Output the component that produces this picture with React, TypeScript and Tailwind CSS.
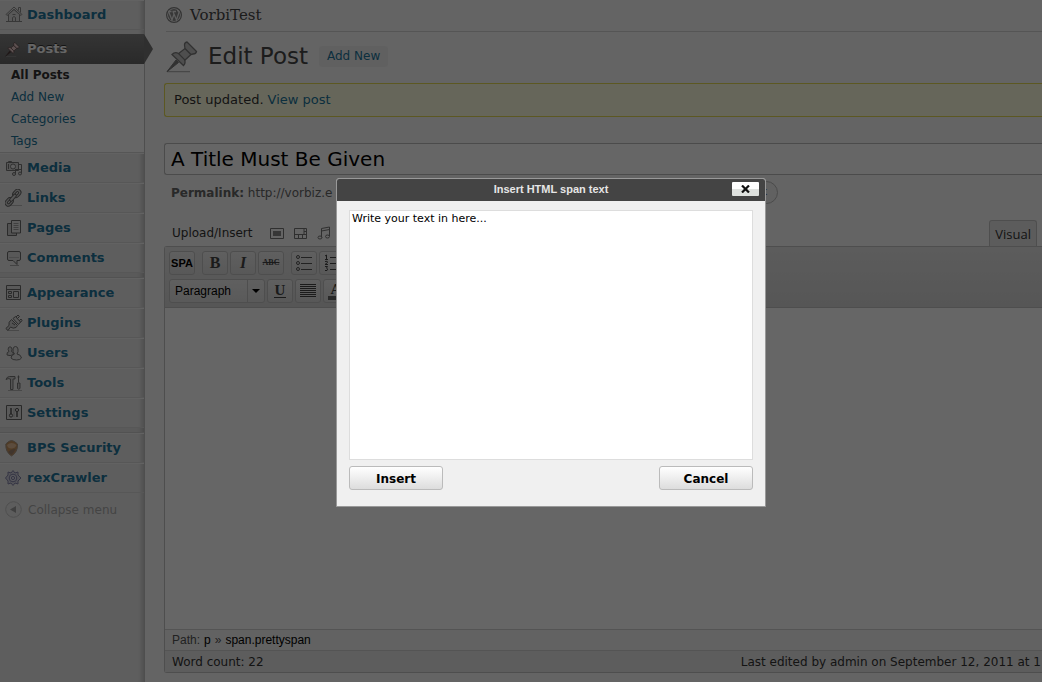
import React from "react";

type IconName =
  | "home" | "media" | "links" | "pages" | "comments" | "appearance"
  | "plugins" | "users" | "tools" | "settings" | "shield" | "gear";

function MenuIcon({ name }: { name: IconName }) {
  const base = {
    width: 18, height: 18, viewBox: "0 0 18 18", fill: "none",
    stroke: "#777777", strokeWidth: 1, "aria-hidden": true, className: "shrink-0",
  } as const;
  switch (name) {
    case "home":
      return (
        <svg {...base} stroke="#8a8a8a">
          <path d="M3.500 8.500v7h11v-7L9 3.500z" fill="#dddddd" />
          <path d="M1 8.500 9 1l8 7.500-1 1L9 3.200 2 9.500z" fill="#eeeeee" />
          <path d="M13.500 4.500v-3h2v5M7.500 15.500v-4q1.500-2 3 0v4M7.500 8.500h3M1 15.500h16" />
        </svg>
      );
    case "media":
      return (
        <svg {...base}>
          <path d="M3.500 3.500v-1h3v1M1.500 3.500h12v8h-12z" fill="#d4d4d4" />
          <circle cx="8" cy="7.500" r="2.500" fill="#eeeeee" />
          <path d="M3.500 5v5M14 5.500h2.500v9M10.500 10v5.500M10.500 10.500h6" />
          <circle cx="9" cy="15" r="1.500" fill="#dddddd" /><circle cx="15" cy="14.500" r="1.500" fill="#dddddd" />
        </svg>
      );
    case "links":
      return (
        <svg {...base} stroke="#666666">
          <path d="M4 16.500h13" stroke="#b8b8b8" />
          <g transform="rotate(-48 8 9)">
            <rect x="-2" y="5.500" width="9" height="6.500" rx="3.200" fill="#cfcfcf" />
            <rect x="9.500" y="5.500" width="9" height="6.500" rx="3.200" fill="#cfcfcf" />
            <rect x="0.500" y="7.700" width="4" height="2.200" rx="1" fill="#ececec" />
            <rect x="12" y="7.700" width="4" height="2.200" rx="1" fill="#ececec" />
            <rect x="4" y="7.300" width="8.500" height="3" rx="1.500" fill="#d8d8d8" />
          </g>
        </svg>
      );
    case "pages":
      return (
        <svg {...base} stroke="#6c6c6c">
          <path d="M6.500 4.500h-4v12h9V14" fill="#cccccc" />
          <path d="M6.500 1.500h9v12.500h-9z" fill="#e6e6e6" />
          <path d="M8.500 4.500h5M8.500 6.500h5M8.500 8.500h5M8.500 10.500h5" stroke="#a0a0a0" />
        </svg>
      );
    case "comments":
      return (
        <svg {...base} stroke="#6c6c6c">
          <path d="M4 2.500h10q1.500 0 1.500 1.500v6q0 1.500-1.500 1.500h-2v4l-4-4H4q-1.500 0-1.500-1.500V4q0-1.500 1.500-1.500z" fill="#dcdcdc" />
          <path d="M4 8.500h10" stroke="#bbbbbb" /><path d="M5 16.500h9" stroke="#a8a8a8" />
        </svg>
      );
    case "appearance":
      return (
        <svg {...base} stroke="#6c6c6c">
          <path d="M1.500 1.500h14v14h-14z" fill="#dedede" />
          <path d="M2 5.500h13.500M3.500 7.500h3v2h-3zM3.500 11.500h3v2h-3zM8.500 7.500h5v6h-5z" />
        </svg>
      );
    case "plugins":
      return (
        <svg {...base} stroke="#6c6c6c">
          <path d="M3 16.500h11" stroke="#b4b4b4" />
          <path d="M6.500 5.500 12.500 11.500 11 13.500Q8 15 5.500 13L3 16.500.8 14.500 4 11.500Q3 8 6.500 5.500z" fill="#d0d0d0" />
          <path d="M8 4.500l5.500 6 2-2.500-5-5.500zM11 3l2-2 1.500 1.500-2 2M14 7l2-2 1 1.500-1.500 2M7 9l3 2" fill="#dedede" />
        </svg>
      );
    case "users":
      return (
        <svg {...base}>
          <path d="M2 11q-.5-3 2-3.500Q2.500 5.500 3.500 3.500 5 2 6.500 3.500 7.500 5.500 6.500 7.500q2 .5 2 3Q5 12.500 2 11z" fill="#d2d2d2" />
          <path d="M6 14q0-3 3.500-4-2-2-1.500-5 .5-2.500 2.500-2.500T13 5q.5 3-1 5 4 .500 4.500 4-1 2-5 2T6 14z" fill="#e0e0e0" />
        </svg>
      );
    case "tools":
      return (
        <svg {...base}>
          <path d="M1 5.500Q2 2.500 4.500 2.500H10v2.500H8v10.500H5.500V5Q3 4 1 5.500z" fill="#cfcfcf" />
          <path d="M13.500 1.500v7M12.500 3h2M12.500 9h2.500v5.500q-1.200 1.500-2.500 0z" fill="#c6c6c6" />
          <path d="M3 16.500h14" stroke="#b4b4b4" />
        </svg>
      );
    case "settings":
      return (
        <svg {...base} stroke="#666666">
          <path d="M1.500 1.500h15v14h-15z" fill="#e0e0e0" />
          <path d="M6 4v6M12 8v5" strokeWidth="1.500" stroke="#555555" />
          <circle cx="6" cy="11.500" r="1.600" stroke="#555555" /><circle cx="12" cy="6" r="1.600" stroke="#555555" />
          <path d="M9 4v9" stroke="#b4b4b4" />
        </svg>
      );
    case "shield":
      return (
        <svg {...base} stroke="#a89a8c">
          <path d="M.8 5Q4 1.500 6.500 1.500T12.500 5q.5 8-6 12Q.3 13 .8 5z" fill="#c79560" />
          <path d="M2 6q4.500-4 9.500 0-1 3-4.500 3.500Q3 10 2 6z" fill="#e5bf98" stroke="none" />
          <path d="M3 13q3-3 7.500-3-1 3-4 6z" fill="#a08470" stroke="none" />
        </svg>
      );
    case "gear":
      return (
        <svg {...base} stroke="#8585aa">
          <path d="M8 1.500l2 2.500 3-1v3l3 3-3 3v3l-3-1-2 2.500L6 14l-3 1v-3L.5 9 3 6V3l3 1z" fill="#cfcfdc" />
          <circle cx="8" cy="9" r="3.800" fill="#dedee8" /><circle cx="8" cy="9" r="1.600" />
        </svg>
      );
  }
}

function PinIcon({ size, tint, edge }: { size: number; tint: string; edge: string }) {
  return (
    <svg width={size} height={size} viewBox="0 0 32 32" className="shrink-0" stroke={edge} aria-hidden="true">
      <path d="M1 30.700h23" stroke="#a5a5a5" />
      <path d="M1 30.700 10 19l2.500 2.500z" fill={edge} />
      <path d="M12 13 19 7.500 25 13.500 18.500 19.500z" fill={tint} strokeWidth="1.300" />
      <path d="M6 13.500Q9 10.500 12.500 12.500L18.500 18.500Q20 22 17.500 24.500z" fill={tint} strokeWidth="1.300" />
      <path d="M18.500 4Q18.500 1.500 21 1L30.500 10.500Q30 13 27 13L25 13.500 19 7.500z" fill={tint} strokeWidth="1.300" />
    </svg>
  );
}

function MenuRow({ icon, label }: { icon: IconName; label: string }) {
  return (
    <li className="border-t border-[#f5f5f5] border-b border-b-[#d9d9d9]">
      <a href="#" className="flex h-7 items-center gap-1 pl-[5px] text-[13px] font-bold text-[#21759b]">
        <MenuIcon name={icon} />
        {label}
      </a>
    </li>
  );
}

function Separator() {
  return <li aria-hidden="true" className="h-[5px] border-b border-[#cccccc] bg-black/5" />;
}

function Sidebar() {
  return (
    <nav aria-label="Admin menu" className="w-[145px] shrink-0 border-r border-[#c4c4c4] bg-[#ececec] shadow-[inset_-6px_0_5px_-4px_#bdbdbd]">
      <ul>
        <MenuRow icon="home" label="Dashboard" />
        <li>
          <a href="#" className="relative mt-1 flex h-[30px] items-center gap-1 bg-linear-to-b from-[#858585] to-[#686868] pl-[5px] text-[13px] font-bold text-white [text-shadow:0_-1px_0_#333]">
            <span className="flex w-[18px]"><PinIcon size={15} tint="#e6c8c8" edge="#4d3838" /></span>
            Posts
            <svg width="9" height="30" viewBox="0 0 9 30" className="absolute top-0 left-full" aria-hidden="true">
              <path d="M0 0 9 15 0 30z" fill="#757575" />
            </svg>
          </a>
          <ul className="border-b border-[#d6d6d6] bg-white pl-[11px] text-[12px] leading-[22px] text-[#21759b]">
            <li><a href="#" className="font-bold text-[#333333]">All Posts</a></li>
            <li><a href="#">Add New</a></li>
            <li><a href="#">Categories</a></li>
            <li><a href="#">Tags</a></li>
          </ul>
        </li>
        <MenuRow icon="media" label="Media" />
        <MenuRow icon="links" label="Links" />
        <MenuRow icon="pages" label="Pages" />
        <MenuRow icon="comments" label="Comments" />
        <Separator />
        <MenuRow icon="appearance" label="Appearance" />
        <MenuRow icon="plugins" label="Plugins" />
        <MenuRow icon="users" label="Users" />
        <MenuRow icon="tools" label="Tools" />
        <MenuRow icon="settings" label="Settings" />
        <Separator />
        <MenuRow icon="shield" label="BPS Security" />
        <MenuRow icon="gear" label="rexCrawler" />
      </ul>
      <button className="flex h-[34px] items-center gap-[5px] pl-[5px] text-[12px] text-[#aaaaaa]">
        <svg width="18" height="18" viewBox="0 0 18 18" aria-hidden="true">
          <circle cx="8.500" cy="8.500" r="7.800" fill="#e8e8e8" stroke="#c4c4c4" />
          <path d="M5 8.500 11 5v7z" fill="#a0a0a0" />
        </svg>
        Collapse menu
      </button>
    </nav>
  );
}

function ToolButton({ label, children }: { label: string; children: React.ReactNode }) {
  return (
    <button aria-label={label} className="flex h-6 w-[26px] shrink-0 items-center justify-center overflow-hidden rounded-[3px] border border-[#c3c3c3] bg-linear-to-b from-[#efefef] to-[#dcdcdc] text-[#444444]">
      {children}
    </button>
  );
}

function Toolbar() {
  return (
    <div className="flex h-[61px] flex-col gap-1 border-b border-[#c4c4c4] bg-linear-to-b from-[#e6e6e6] to-[#d7d7d7] pt-1 pl-1">
      <div className="flex">
        <div className="mr-[7px] flex">
          <ToolButton label="Insert span">
            <span className="font-['Liberation_Sans'] text-[11px] font-bold text-black">SPA</span>
          </ToolButton>
        </div>
        <div className="mr-[7px] flex gap-[2px]">
          <ToolButton label="Bold"><span className="font-['Liberation_Serif'] text-[16px] font-bold">B</span></ToolButton>
          <ToolButton label="Italic"><span className="font-['Liberation_Serif'] text-[16px] font-bold italic">I</span></ToolButton>
          <ToolButton label="Strikethrough"><span className="font-['Liberation_Serif'] text-[8px] font-bold line-through">ABC</span></ToolButton>
        </div>
        <div className="flex gap-[2px]">
          <ToolButton label="Bulleted list">
            <svg width="18" height="18" viewBox="0 0 18 18" fill="none" stroke="#555555">
              <circle cx="3" cy="3" r="1.500" /><circle cx="3" cy="9" r="1.500" /><circle cx="3" cy="15" r="1.500" />
              <path d="M6 3.500h11M6 9.500h11M6 15.500h11" />
            </svg>
          </ToolButton>
          <ToolButton label="Numbered list">
            <svg width="18" height="18" viewBox="0 0 18 18" fill="none" stroke="#444444">
              <path d="M2 2l1.500-1v4M2 5.500h3M2 7.500q3-1 2.500 1L2 10.500h3M2 12.500h2.500L3.500 14q2 1 .5 2.500H2M7 3.500h10M7 9.500h10M7 15.500h10" />
            </svg>
          </ToolButton>
        </div>
      </div>
      <div className="flex gap-[2px]">
        <button aria-label="Format: Paragraph" className="flex h-6 w-[96px] items-center rounded-[3px] border border-[#c3c3c3] bg-linear-to-b from-[#efefef] to-[#e0e0e0] font-['Liberation_Sans'] text-[12px] text-black">
          <span className="flex-1 pl-[5px] text-left">Paragraph</span>
          <span className="flex h-full w-[17px] items-center justify-center border-l border-[#c3c3c3]">
            <svg width="8" height="4" viewBox="0 0 8 4" aria-hidden="true"><path d="M0 0h8L4 4z" /></svg>
          </span>
        </button>
        <ToolButton label="Underline"><span className="border-b border-[#444444] px-px font-['Liberation_Serif'] text-[15px] leading-[13px] font-bold">U</span></ToolButton>
        <ToolButton label="Justify">
          <svg width="16" height="14" viewBox="0 0 16 14" stroke="#444444"><path d="M0 .5h16M0 2.500h16M0 4.500h16M0 6.500h16M0 8.500h16M0 10.500h16M0 12.500h16" /></svg>
        </ToolButton>
        <ToolButton label="Text colour"><span className="border-b-4 border-[#666666] px-[3px] font-['Liberation_Serif'] text-[15px] leading-[13px] font-bold">A</span></ToolButton>
      </div>
    </div>
  );
}

function Editor() {
  return (
    <section aria-label="Post editor" className="flex flex-col">
      <div className="flex h-[26px] items-end justify-between pr-[5px]">
        <div className="flex h-[26px] items-center gap-[17px] pl-2 text-[12px] text-[#333333]">
          <span>Upload/Insert</span>
          <div className="flex items-center gap-[9px]">
            <button aria-label="Add image">
              <svg width="15" height="13" viewBox="0 0 15 13" className="block"><path d="M.5 1.500h13v10H.5z" fill="none" stroke="#777777" /><path d="M3 4h8v5H3z" fill="#8b8b8b" /></svg>
            </button>
            <button aria-label="Add video">
              <svg width="14" height="13" viewBox="0 0 14 13" fill="none" stroke="#777777" className="block"><path d="M.5 1.500h12v10H.5zM10 1.500v6M.5 7.500h12M4.500 7.500v4M8.500 7.500v4M10 4.500h2.500" /></svg>
            </button>
            <button aria-label="Add audio">
              <svg width="14" height="14" viewBox="0 0 14 14" fill="none" stroke="#777777" className="block"><path d="M4.500 11.500v-9l8-1.500v9M4.500 5l8-1.500" /><ellipse cx="3" cy="11.500" rx="2" ry="1.500" /><ellipse cx="10.500" cy="10.500" rx="2" ry="1.500" /></svg>
            </button>
          </div>
        </div>
        <button className="h-[26px] rounded-t-[3px] border border-b-0 border-[#c4c4c4] bg-[#e6e6e6] px-[5px] pt-[2px] font-['Open_Sans'] text-[13px] text-[#333333]">Visual</button>
      </div>
      <div className="rounded-l-[3px] border border-r-0 border-[#c4c4c4]">
        <Toolbar />
        <div className="h-[321px] bg-white" />
        <div className="flex h-[22px] items-center gap-1 border-y border-[#d2d2d2] bg-[#f4f4f4] pl-[7px] font-['Liberation_Sans'] text-[12px] text-black">
          <span className="text-[#555555]">Path:</span>
          <a href="#">p</a>
          <span className="text-[#555555]">»</span>
          <a href="#">span.prettyspan</a>
        </div>
        <div className="flex h-[21px] items-center justify-between bg-[#e9e9e9] pr-px pl-[7px] text-[12px] text-[#333333]">
          <span>Word count: 22</span>
          <span>Last edited by admin on September 12, 2011 at 1</span>
        </div>
      </div>
    </section>
  );
}

function Dialog() {
  return (
    <div className="fixed inset-0 flex items-center justify-center bg-black/60 pt-[3px] pl-[60px]">
      <div role="dialog" aria-labelledby="dialog-title" className="w-[430px] rounded-t-[3px] border border-[#999999] bg-[#f0f0f0]">
        <header className="grid h-[22px] grid-cols-[1fr_auto_1fr] items-center rounded-t-[2px] bg-[#444444] pb-[2px]">
          <h2 id="dialog-title" className="col-start-2 font-['Liberation_Sans'] text-[11px] font-bold text-[#e6e6e6]">Insert HTML span text</h2>
          <button aria-label="Close" className="mr-[6px] flex h-[14px] w-[27px] items-center justify-center justify-self-end rounded-[1px] bg-linear-to-b from-white from-50% to-[#dfe2df] to-50%">
            <svg width="9" height="8" viewBox="0 0 9 8" stroke="#111111" strokeWidth="2.200"><path d="M1 .5 8 7.500M8 .5 1 7.500" /></svg>
          </button>
        </header>
        <div className="flex flex-col gap-[6px] px-3 pt-[9px] pb-4">
          <textarea aria-label="Span text" defaultValue="Write your text in here..." className="block h-[250px] w-full resize-none border border-[#dddddd] bg-white px-[2px] py-[2px] text-[11px] leading-3 text-black outline-none" />
          <div className="flex justify-between text-[12px] font-bold text-black">
            <button className="h-6 w-[94px] rounded-[3px] border border-[#bbbbbb] bg-linear-to-b from-white to-[#dddddd] pt-px">Insert</button>
            <button className="h-6 w-[94px] rounded-[3px] border border-[#bbbbbb] bg-linear-to-b from-white to-[#dddddd] pt-px">Cancel</button>
          </div>
        </div>
      </div>
    </div>
  );
}

export default function App() {
  return (
    <div className="flex min-h-screen bg-[#f9f9f9] font-['DejaVu_Sans',sans-serif]">
      <Sidebar />
      <main className="min-w-0 flex-1 overflow-hidden pl-[19px] whitespace-nowrap">
        <header className="ml-[2px] flex h-8 items-center gap-2 border-b border-[#d4d4d4] pb-px">
          <svg width="16" height="16" viewBox="0 0 16 16" fill="none" stroke="#808080" aria-hidden="true">
            <circle cx="8" cy="8" r="7.400" strokeWidth="1.200" />
            <circle cx="8" cy="8" r="6" fill="#8c8c8c" stroke="none" />
            <path d="M2.500 4.500 6 13l2-6 2.500 6L13 5.500M2 4.500h3.500M6.500 4.500H10M7 4.500l1 2.500M11 3.500q2 0 2 2" stroke="#eeeeee" strokeWidth="1.300" />
          </svg>
          <a href="#" className="font-['DejaVu_Serif'] text-[15px] text-[#464646]">VorbiTest</a>
        </header>
        <div className="flex h-[51px] items-center pb-[2px] pl-[2px]">
          <PinIcon size={32} tint="#c4c4c4" edge="#7c7c7c" />
          <h1 className="ml-[10px] text-[23px] text-[#464646]">Edit Post</h1>
          <a href="#" className="ml-[11px] rounded-[3px] bg-[#f1f1f1] px-2 text-[12px] leading-[21px] text-[#21759b]">Add New</a>
        </div>
        <p className="flex h-[34px] items-center gap-1 rounded-l-[3px] border border-r-0 border-[#e6db55] bg-[#ffffe0] pl-[9px] text-[13px] text-[#333333]">
          Post updated. <a href="#" className="text-[#21759b]">View post</a>
        </p>
        <input aria-label="Post title" defaultValue="A Title Must Be Given" className="mt-[26px] block h-8 w-full rounded-l-[3px] border border-r-0 border-[#bbbbbb] bg-white px-[6px] text-[20px] text-black" />
        <div className="mt-[6px] mb-4 ml-[7px] flex h-[23px] w-[607px] items-center justify-between text-[12px] text-[#666666]">
          <span><strong>Permalink:</strong> http://vorbiz.e</span>
          <button className="h-[23px] rounded-full border border-[#bbbbbb] bg-[#f2f2f2] px-[10px] text-[11px] text-[#464646]">Get Shortlink</button>
        </div>
        <Editor />
      </main>
      <Dialog />
    </div>
  );
}
